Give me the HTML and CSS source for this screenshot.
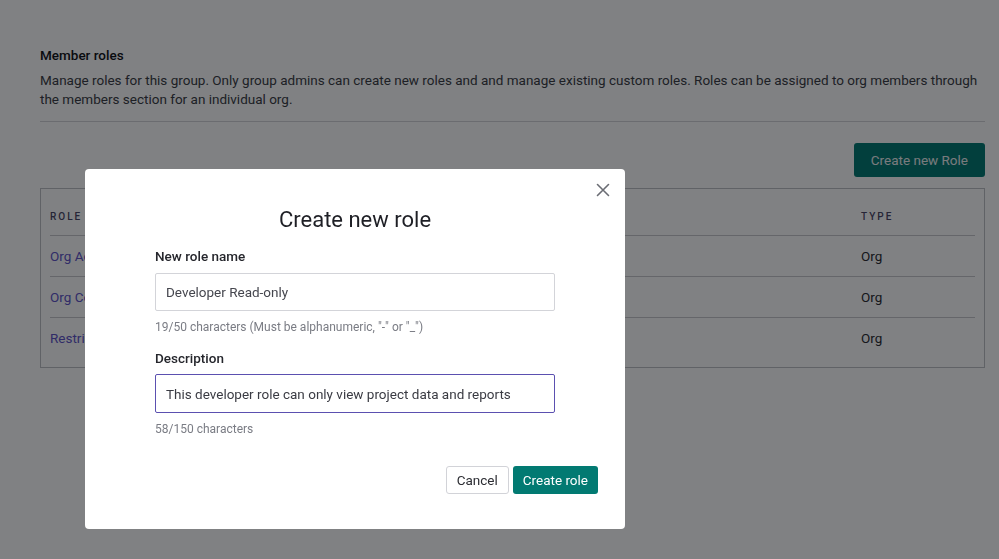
FILE: index.html
```html
<!DOCTYPE html>
<html>
<head>
<meta charset="utf-8">
<link rel="stylesheet" href="styles.css">
</head>
<body>
<div class="page">
  <h2 class="title">Member roles</h2>
  <p class="desc">Manage roles for this group. Only group admins can create new roles and and manage existing custom roles. Roles can be assigned to org members through the members section for an individual org.</p>
  <div class="divider"></div>
  <div class="actions"><button class="btn-primary big">Create new Role</button></div>
  <div class="table-box">
    <div class="row head"><span class="c-role">ROLE</span><span class="c-type">TYPE</span></div>
    <div class="row"><span class="c-role link">Org Admin</span><span class="c-type">Org</span></div>
    <div class="row"><span class="c-role link">Org Collaborator</span><span class="c-type">Org</span></div>
    <div class="row last"><span class="c-role link">Restricted Collaborator</span><span class="c-type">Org</span></div>
  </div>
</div>

<div class="overlay">
  <div class="modal">
    <div class="close-row">
      <svg class="close" width="14" height="14" viewBox="0 0 14 14"><path d="M1.5 1.5 L12.5 12.5 M12.5 1.5 L1.5 12.5" stroke="#6b6d74" stroke-width="1.6" fill="none" stroke-linecap="round"/></svg>
    </div>
    <div class="form">
      <h3 class="modal-title">Create new role</h3>
      <label class="label">New role name</label>
      <div class="input">Developer Read-only</div>
      <div class="help">19/50 characters (Must be alphanumeric, "-" or "_")</div>
      <label class="label second">Description</label>
      <div class="input focused">This developer role can only view project data and reports</div>
      <div class="help second">58/150 characters</div>
    </div>
    <div class="footer">
      <button class="btn-secondary">Cancel</button>
      <button class="btn-primary">Create role</button>
    </div>
  </div>
</div>
</body>
</html>
```

FILE: styles.css
```css
html, body {
  margin: 0;
  padding: 0;
  background: #ffffff;
  font-family: Roboto, "Liberation Sans", sans-serif;
  color: #1d1e24;
}

.page {
  padding: 47px 14px 0 40px;
}

.title {
  margin: 0;
  font-size: 13.5px;
  line-height: 16px;
  font-weight: 500;
  color: #111216;
}

.desc {
  margin: 8px 0 0;
  font-size: 13.5px;
  line-height: 19px;
  color: #3a3c44;
}

.divider {
  margin-top: 12px;
  height: 1px;
  background: #d4d5d9;
}

.actions {
  display: flex;
  justify-content: flex-end;
  margin-top: 21px;
}

.btn-primary {
  background: #027a72;
  color: #ffffff;
  border: none;
  border-radius: 3px;
  font-family: Roboto, "Liberation Sans", sans-serif;
  font-size: 13.5px;
  height: 28px;
  padding: 0 10px;
}

.btn-primary.big {
  height: 34px;
  padding: 0 17px;
  color: #f0f2f2;
}

.table-box {
  margin-top: 11px;
  border: 1px solid #bfc0c5;
  padding: 0 9px 9px;
}

.row {
  display: flex;
  align-items: center;
  height: 40px;
  border-top: 1px solid #c8c9cd;
  font-size: 13.5px;
}

.row.head {
  border-top: none;
  height: 38px;
  padding-top: 8px;
  font-size: 10px;
  letter-spacing: 2px;
  color: #4a4766;
  font-weight: 500;
}

.c-role {
  width: 811px;
}

.c-type {
  flex: 1;
  color: #2a2b30;
}

.row.head .c-type {
  color: #4a4766;
}

.link {
  color: #6054c8;
}

.overlay {
  position: fixed;
  inset: 0;
  background: rgba(2, 4, 8, 0.5);
  padding: 169px 0 0 85px;
  box-sizing: border-box;
}

.modal {
  width: 540px;
  height: 360px;
  background: #ffffff;
  border-radius: 4px;
  box-sizing: border-box;
  display: flex;
  flex-direction: column;
}

.close-row {
  display: flex;
  justify-content: flex-end;
  padding: 14px 15px 0 0;
  height: 14px;
}

.form {
  width: 400px;
  margin-left: 70px;
  display: flex;
  flex-direction: column;
}

.modal-title {
  margin: 9px 0 0;
  text-align: center;
  font-size: 22px;
  line-height: 28px;
  font-weight: 400;
  color: #1e1f25;
}

.label {
  margin-top: 14px;
  font-size: 13.5px;
  line-height: 16px;
  font-weight: 500;
  color: #25262c;
}

.label.second {
  margin-top: 16px;
}

.input {
  margin-top: 9px;
  height: 38px;
  box-sizing: border-box;
  border: 1px solid #d3d4d9;
  border-radius: 2px;
  padding: 0 10px;
  display: flex;
  align-items: center;
  font-size: 13.5px;
  color: #45464e;
}

.input.focused {
  margin-top: 8px;
  height: 39px;
  border-color: #5b50b0;
  color: #3a3b43;
}

.help {
  margin-top: 9px;
  font-size: 12px;
  line-height: 14px;
  color: #7a7c84;
}

.help.second {
  margin-top: 9px;
}

.footer {
  display: flex;
  justify-content: flex-end;
  gap: 4px;
  padding: 30px 27px 0 0;
}

.btn-secondary {
  height: 28px;
  box-sizing: border-box;
  padding: 0 10px;
  background: #ffffff;
  border: 1px solid #d2d3d8;
  border-radius: 3px;
  font-family: Roboto, "Liberation Sans", sans-serif;
  font-size: 13.5px;
  color: #2c2d33;
}
```
